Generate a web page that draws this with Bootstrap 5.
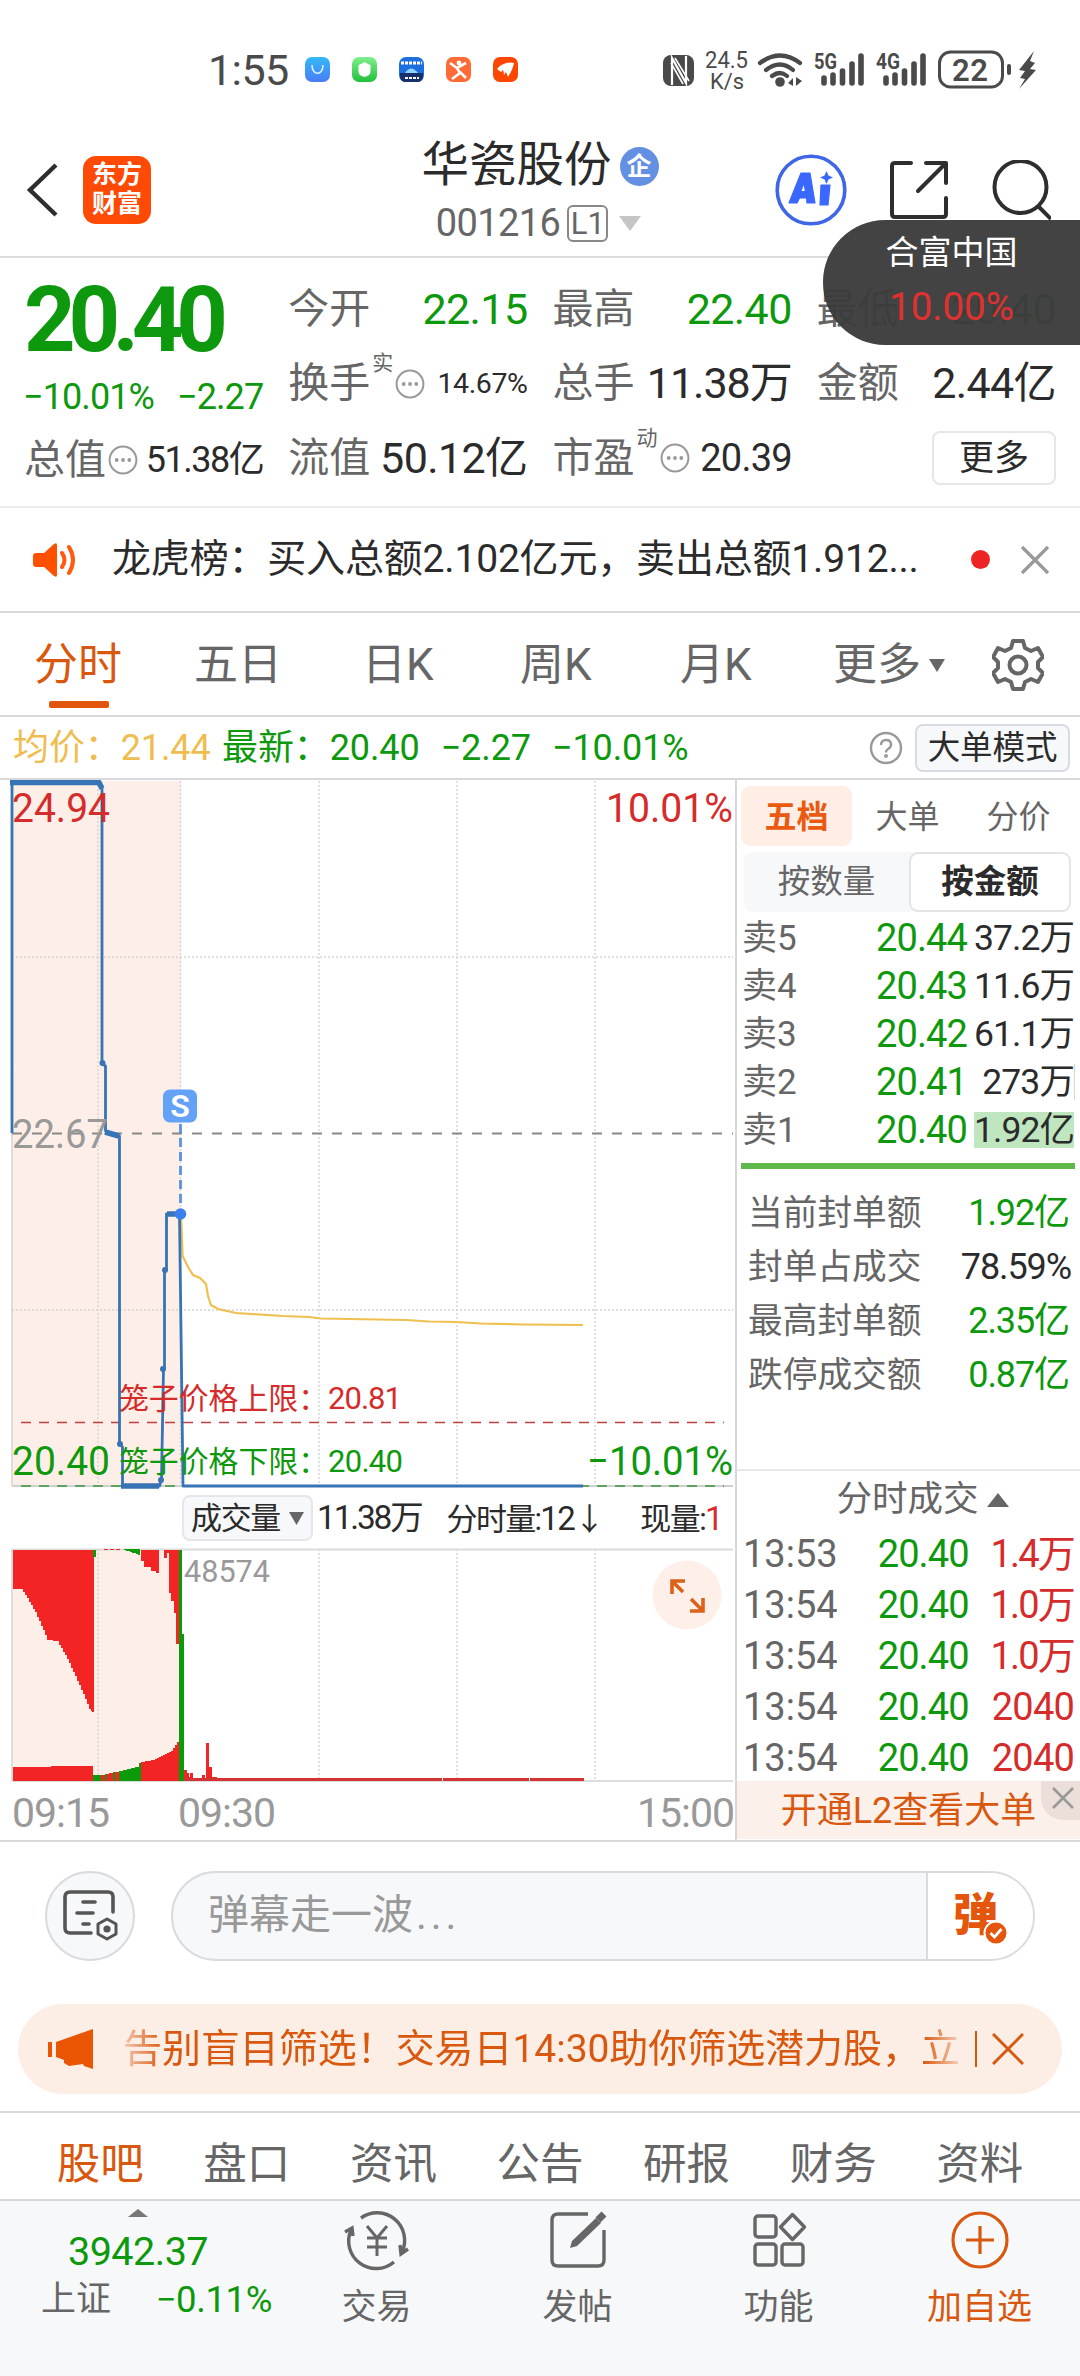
<!DOCTYPE html>
<html lang="zh-CN">
<head>
<meta charset="utf-8">
<meta name="viewport" content="width=device-width, initial-scale=1">
<title>华瓷股份 001216</title>
<link href="https://cdn.jsdelivr.net/npm/bootstrap@5.3.0/dist/css/bootstrap.min.css" rel="stylesheet">
<style>
:root{--up:#d62b2b;--down:#0d980d;--ink:#2b2b2b;--mute:#666;--soft:#999;--brand:#d9580f}
body{width:1080px;height:2376px;overflow:hidden;background:#fff;color:var(--ink);font-family:Roboto,"Noto Sans CJK SC",sans-serif;line-height:1;white-space:nowrap;position:relative}
svg{display:block;flex:none}
.c-up{color:var(--up)}.c-down{color:var(--down)}.c-mute{color:var(--mute)}.c-soft{color:var(--soft)}.c-brand{color:var(--brand)}
.status-bar{height:138px;padding:2px 43px 0 208px;color:#4a4a4a}
.clock{font-size:43px;width:95px;letter-spacing:-.6px}
.head-bar{height:120px;padding:0 29px 0 26px;border-bottom:2px solid #dcdcdc}
.em-logo{width:68px;height:68px;border-radius:13px;background:#ff4a05;color:#fff;font-size:25px;font-weight:700;line-height:29px;padding-top:4px;margin-left:23px}
.head-side{width:310px;padding-bottom:14px}
.stock-name{font-size:47.500px}
.ent-badge{width:39px;height:39px;background:#6490e4;color:#fff;font-size:25px;font-weight:700;margin-left:8px}
.stock-code{font-size:38px;letter-spacing:-.6px;color:var(--mute)}
.lv-box{width:41px;height:37px;border:2px solid #888;border-radius:6px;font-size:31px;letter-spacing:0;margin-left:7px;color:var(--mute)}
.tri-down{width:0;height:0;border:11px solid transparent;border-top:15px solid #c5c5c5;border-bottom:0;margin-left:11px}
.quote{height:250px;padding:14px 24px 0 25px;gap:26px;border-bottom:2px solid #ececec}
.quote .qcol{flex:1 1 0;min-width:0}
.qrow{height:74.5px;display:flex;align-items:center}
.qrow .lb{font-size:41px;color:var(--mute);margin-left:-1px}
.qrow .v{margin-left:auto;font-size:43px;letter-spacing:-.6px}
.qrow sup{font-size:21px;top:-20px;margin:0 2px;color:var(--mute);align-self:center;line-height:1}
.price-big{height:98px;font-size:90px;font-weight:700;letter-spacing:-7.2px;margin-left:-1px}
.price-chg{height:53px;font-size:36px;letter-spacing:-.9px;margin-left:-2px}
.more-btn{width:124px;height:54px;border:2px solid #e6e6e6;border-radius:8px;font-size:35px;color:var(--ink)}
.news{height:105px;padding:0 30px 0 33px;border-bottom:2px solid #d8d8da}
.news-text{font-size:39px;letter-spacing:-.18px;width:869px;padding-left:33px}
.red-dot{width:19px;height:19px;background:#ee2424}
.k-tabs{height:104px;border-bottom:2px solid #d8d8da;font-size:44px;color:var(--mute);padding:2px 0 0 34px}
.k-tabs .kt{position:relative}
.k-tabs .on{color:var(--brand)}
.k-tabs .on::after{content:"";position:absolute;left:15px;width:60px;height:7px;border-radius:2px;background:#e2560c;top:58px}
.info-line{height:63px;border-bottom:2px solid #d8d8da;font-size:36px;padding:1px 10px 0 13px;letter-spacing:-.1px}
.mode-btn{width:155px;height:48px;border:2px solid #d9dbe2;border-radius:8px;background:#f7f8fa;font-size:32.5px;color:var(--ink)}
.board{height:1062px;border-bottom:2px solid #d8d8da}
.chart-col{width:735px}
.vol-head{height:58px;padding:0 13px 2px 182px;font-size:31px}
.vol-btn{width:131px;height:46px;border:2px solid #e4e6ec;border-radius:8px;background:#f7f8fa;letter-spacing:-1.4px}
.time-axis{height:58px;font-size:41px;color:var(--soft);padding:1px 1px 0 12px;letter-spacing:-1px}
.side{width:345px;border-left:2px solid #d8d8da}
.s-tabs{height:72px;padding:6px 0 0 4px;font-size:32px;color:var(--mute)}
.s-tabs .st{width:111px;height:60px;padding-top:2px}
.s-tabs .on{background:#feeee6;border-radius:9px;color:#ea5a10;font-weight:700}
.seg{margin:0 9px 0 7px;height:60px;background:#f7f8fa;border-radius:9px;font-size:32.5px;color:var(--mute)}
.seg .on{width:163px;height:60px;border:2px solid #e4e4e4;border-radius:9px;background:#fff;color:var(--ink);font-weight:700;padding-top:1px}
.seg .off{width:166px}
.ask{height:48px;padding:0 1px 0 5px;font-size:35px;width:338px}
.ask .p,.trade .p{font-size:38px;letter-spacing:-.9px;width:91px;text-align:right}
.ask .a{font-size:35.5px;letter-spacing:-.9px;width:100px;height:36px;line-height:36px;margin-left:7px;text-align:right;color:var(--ink)}
.ask .hot{background:#bfe6bf}
.ask .sliver{box-shadow:1px 0 0 #bfe6bf}
.limit-bar{height:6px;background:#5fb84a;margin:9px 5px 0 4px}
.stat{height:54px;padding:0 11px 0 11px;font-size:34.7px}
.stat .v{font-size:36px;letter-spacing:-1.1px}
.deal-head{height:58px;border-top:2px solid #e8e8e8;font-size:35.5px;padding:2px 0 0 18px}
.tri-up{width:0;height:0;border:11px solid transparent;border-bottom:14px solid #666;border-top:0;margin-left:8px}
.trade{height:51px;padding:0 6px 0 6px;font-size:38px}
.promo{height:58px;background:#fcf0ea;font-size:36px;position:relative;padding-top:2px}
.promo .x{position:absolute;right:0;top:0;width:39px;height:39px;background:#ecdfd9;border-bottom-left-radius:22px}
.barrage{height:176px;padding:0 45px 29px}
.round-btn{width:90px;height:90px;border:2px solid #d9dbe0;background:#f7f8fa}
.b-input{width:864px;height:90px;border:2px solid #d9dbe0;border-radius:45px;overflow:hidden;background:#f7f8fa}
.b-input .ph{font-size:41px;color:#999;padding-left:35px}
.b-input .ph i{font-style:normal;letter-spacing:4px;margin-left:3px}
.b-send{width:107px;height:86px;background:#fff;border-left:2px solid #d9dbe0;position:relative;font-size:45px;font-weight:900;color:#e4560c;padding-left:25px}
.b-send svg{position:absolute;left:55px;top:47px}
.ad{margin:-14px 18px 0;height:90px;border-radius:45px;background:#fceee5;padding:0 38px 0 30px;font-size:39px}
.ad .txt{width:836px;margin-left:29px;letter-spacing:-.05px;overflow:hidden;line-height:50px;-webkit-mask-image:linear-gradient(90deg,rgba(0,0,0,.25),#000 40px,#000 800px,rgba(0,0,0,.2))}
.ad .bar{width:2px;height:36px;background:var(--brand);margin-left:16px}
.f-tabs{margin-top:17px;height:90px;border-top:2px solid #d8d8da;border-bottom:2px solid #d8d8da;padding:18px 27px 0;font-size:43.5px;color:var(--mute)}
.f-tabs div{flex:1;text-align:center}
.dock{height:175px;background:#f7f8fa;color:var(--mute);font-size:35px}
.dock svg{overflow:visible}
.dock .idx{width:276px;padding-top:8px}
.dock .it{width:201px;padding-top:10px}
.dock .it span{margin-top:19px;line-height:40px}
.float-tip{position:absolute;right:0;top:220px;width:257px;height:125px;border-radius:62px 0 0 62px;background:rgba(60,60,60,.965);color:#fff;font-size:33px}
</style>
<script src="https://cdn.jsdelivr.net/npm/bootstrap@5.3.0/dist/js/bootstrap.bundle.min.js"></script>
</head>
<body>
<svg width="0" height="0" class="position-absolute"><defs>
<g id="dots"><circle cx="15" cy="15" r="13.4" fill="none" stroke="#999" stroke-width="2"/><g fill="#999"><circle cx="8.7" cy="15" r="1.9"/><circle cx="15" cy="15" r="1.9"/><circle cx="21.3" cy="15" r="1.9"/></g></g>
</defs></svg>

<div class="status-bar d-flex align-items-center">
  <span class="clock">1:55</span>
  <svg width="220" height="28" viewBox="303 0 220 28">
    <defs><linearGradient id="g1" x1="0" y1="0" x2="0" y2="1"><stop offset="0" stop-color="#35b8f8"/><stop offset="1" stop-color="#4a7cf8"/></linearGradient><linearGradient id="g2" x1="0" y1="0" x2="0" y2="1"><stop offset="0" stop-color="#7ff08c"/><stop offset="1" stop-color="#22bf3c"/></linearGradient></defs>
    <rect x="305" y="1" width="25" height="25" rx="7" fill="url(#g1)"/><path d="M312 9c0 11 11 11 11 0" fill="none" stroke="#d8f1ff" stroke-width="1.6"/>
    <rect x="352" y="1" width="25" height="25" rx="7" fill="url(#g2)"/><path d="M364.500 6q5 3 6 3v6c0 4-3 5-6 6-3-1-6-2-6-6V9q3-1 6-3z" fill="#fff"/>
    <rect x="399" y="1" width="25" height="25" rx="7" fill="#1d6fe0"/><path d="M400 17h23v3q0 6-6 6h-11q-6 0-6-6z" fill="#16306b"/><path d="M401 7h21" stroke="#fff" stroke-width="3" stroke-dasharray="3 1"/><path d="M405 17q6-9 13 0z" fill="#8fd4ff"/><path d="M405 22h14" stroke="#fff" stroke-width="2" stroke-dasharray="3 1"/>
    <rect x="446" y="1" width="25" height="25" rx="7" fill="#ff6a35"/><path d="M450 7l7 5 9-5M457 12l3 5-8 6M460 16l6 6" fill="none" stroke="#fff" stroke-width="2.600"/><circle cx="459" cy="7" r="2.400" fill="#fff"/>
    <rect x="493" y="1" width="25" height="25" rx="7" fill="#fb4702"/><path d="M497 13q7-8 17-6-1 6-6 14-1-3-2-5l-2 3q0-3-1-5l-2 2z" fill="#fff"/>
  </svg>
  <svg class="ms-auto" width="376" height="46" viewBox="662 46 376 46" fill="#4a4a4a" font-family="Roboto">
    <rect x="664" y="54" width="31" height="31" rx="8"/><path d="M673 84V57l14 25V55" fill="none" stroke="#fff" stroke-width="2.200"/><path d="M676 57l14 23M672 62l12 21" stroke="#fff" stroke-width="1.600"/>
    <text x="706" y="67" font-size="23" textLength="43" lengthAdjust="spacingAndGlyphs">24.5</text><text x="711" y="88" font-size="22" textLength="34" lengthAdjust="spacingAndGlyphs">K/s</text>
    <g fill="none" stroke="#4a4a4a" stroke-width="4.200" stroke-linecap="round"><path d="M761 62q20-15 40 0M767 69q14-11 27 0M773 75q8-6 15 0"/></g><circle cx="781" cy="81" r="4.800"/><path d="M789 82l5-5v8zM797 76v9l6-5z"/>
    <text x="815" y="68" font-size="22" font-weight="700" textLength="23" lengthAdjust="spacingAndGlyphs">5G</text><text x="877" y="68" font-size="22" font-weight="700" textLength="24" lengthAdjust="spacingAndGlyphs">4G</text>
    <g stroke="#4a4a4a" stroke-width="5.600" stroke-linecap="round"><path d="M825 77v5M834 74v8M843.500 70v12M853 63v19M862 55v27M887 77v5M896 74v8M905.500 70v12M915 63v19M924 55v27"/></g>
    <rect x="940.500" y="51" width="63" height="35" rx="11" fill="none" stroke="#4a4a4a" stroke-width="3"/><text x="953" y="80" font-size="31" font-weight="600" textLength="36" lengthAdjust="spacing">22</text><rect x="1008" y="63" width="4" height="11" rx="2"/><path d="M1035 50l-15 19 6 1-5 7 5 1-6 10 17-19-6-1 5-6-5-2z"/>
  </svg>
</div>

<header class="head-bar d-flex align-items-center justify-content-between">
  <div class="head-side d-flex align-items-center">
    <svg width="34" height="56" viewBox="0 0 34 56"><path d="M30 3L4 28l26 25" fill="none" stroke="#2e2e2e" stroke-width="4.400"/></svg>
    <div class="em-logo text-center">东方<br>财富</div>
  </div>
  <div class="d-flex flex-column align-items-center">
    <div class="d-flex align-items-center" style="height:52px;margin-left:3px"><span class="stock-name">华瓷股份</span><span class="ent-badge rounded-circle d-flex align-items-center justify-content-center">企</span></div>
    <div class="d-flex align-items-center stock-code" style="height:62px">001216<span class="lv-box d-flex align-items-center justify-content-center">L1</span><span class="tri-down"></span></div>
  </div>
  <div class="head-side d-flex align-items-center justify-content-end">
    <svg width="72" height="72" viewBox="0 0 72 72"><circle cx="36" cy="36" r="33.800" fill="none" stroke="#3f66e6" stroke-width="3.600"/><path d="M26 19h9l5 30h-8l-.5-5h-7l-2.500 5h-8zM28.800 29l-3 8.500h4.700zM46 31h9l-2 20h-8z" fill="#3a68ff" stroke="#3a68ff" stroke-width="1.200" stroke-linejoin="round" fill-rule="evenodd"/><path d="M51.500 17l2 4.500 4.500 2-4.500 2-2 4.500-2-4.500-4.500-2 4.500-2z" fill="#3a68ff"/></svg>
    <svg style="margin-left:42px" width="60" height="60" viewBox="0 0 60 60" fill="none" stroke="#2e2e2e" stroke-width="4" stroke-linecap="round" stroke-linejoin="round"><path d="M22 3H6Q3 3 3 6v48q0 3 3 3h48q3 0 3-3V38M37 3h20v20M56 4L29 31"/></svg>
    <svg style="margin-left:42px" width="60" height="60" viewBox="0 0 60 60" fill="none" stroke="#2e2e2e" stroke-width="4"><circle cx="29.500" cy="27" r="26"/><path d="M47 46l13 13"/></svg>
  </div>
</header>

<section class="quote d-flex">
  <div class="qcol">
    <div class="price-big c-down d-flex align-items-center">20.40</div>
    <div class="price-chg c-down d-flex align-items-center justify-content-between"><span>−10.01%</span><span>−2.27</span></div>
    <div class="qrow"><span class="lb">总值</span><svg style="margin-left:2px" width="30" height="30"><use href="#dots"/></svg><span class="v" style="font-size:36px;letter-spacing:-1.500px">51.38亿</span></div>
  </div>
  <div class="qcol">
    <div class="qrow"><span class="lb">今开</span><span class="v c-down">22.15</span></div>
    <div class="qrow"><span class="lb">换手</span><sup>实</sup><svg width="30" height="30"><use href="#dots"/></svg><span class="v" style="font-size:28.500px;letter-spacing:-.4px">14.67%</span></div>
    <div class="qrow"><span class="lb">流值</span><span class="v">50.12亿</span></div>
  </div>
  <div class="qcol">
    <div class="qrow"><span class="lb">最高</span><span class="v c-down">22.40</span></div>
    <div class="qrow"><span class="lb">总手</span><span class="v" style="letter-spacing:-1px">11.38万</span></div>
    <div class="qrow"><span class="lb">市盈</span><sup>动</sup><svg width="30" height="30"><use href="#dots"/></svg><span class="v" style="font-size:38px;letter-spacing:-.8px">20.39</span></div>
  </div>
  <div class="qcol">
    <div class="qrow"><span class="lb">最低</span><span class="v c-down">20.40</span></div>
    <div class="qrow"><span class="lb">金额</span><span class="v">2.44亿</span></div>
    <div class="qrow"><div class="more-btn ms-auto d-flex align-items-center justify-content-center">更多</div></div>
  </div>
</section>

<section class="news d-flex align-items-center">
  <svg width="46" height="38" viewBox="0 0 46 38"><path d="M3 12h8l10-9q3-2 3 1v30q0 3-3 1l-10-9H3q-3 0-3-3v-8q0-3 3-3z" fill="#ff5000"/><path d="M29 12q5 7 0 14M36 6q8 13 0 26" fill="none" stroke="#ff5a10" stroke-width="4" stroke-linecap="round"/></svg>
  <span class="news-text">龙虎榜：买入总额2.102亿元，卖出总额1.912...</span>
  <span class="red-dot rounded-circle ms-auto" style="margin-right:30px"></span>
  <svg width="30" height="30" viewBox="0 0 30 30"><path d="M2 2l26 26M28 2L2 28" stroke="#999" stroke-width="3.200"/></svg>
</section>

<nav class="k-tabs d-flex align-items-center">
  <span class="kt on" style="width:160px">分时</span><span class="kt" style="width:168px">五日</span><span class="kt" style="width:158px">日K</span><span class="kt" style="width:160px">周K</span><span class="kt" style="width:153px">月K</span>
  <span class="kt d-flex align-items-center" style="width:159px">更多<svg class="ms-2" width="16" height="13"><path d="M0 0h16l-8 13z" fill="#666"/></svg></span>
  <svg width="52" height="52" viewBox="-26 -26 52 52" fill="none" stroke="#666" stroke-width="4" stroke-linejoin="round"><path d="M-5-24H5L7-17 13-14 20-17 25-8 20-3V3L25 8 20 17 13 14 7 17 5 24H-5L-7 17-13 14-20 17-25 8-20 3V-3L-25-8-20-17-13-14-7-17z"/><circle r="8.500"/></svg>
</nav>

<div class="info-line d-flex align-items-center">
  <span style="color:#efbd4f;width:209px">均价：21.44</span>
  <span class="c-down">最新：20.40</span><span class="c-down" style="margin-left:21px">−2.27</span><span class="c-down" style="margin-left:21px">−10.01%</span>
  <svg class="ms-auto" width="34" height="34" viewBox="0 0 34 34" fill="none" stroke="#999" stroke-width="2.400"><circle cx="17" cy="17" r="15"/><path d="M12 14q0-5 5-5t5 4.500q0 3-3 4.500-2 1-2 3.500"/><circle cx="17" cy="25" r=".8" fill="#999"/></svg>
  <div class="mode-btn d-flex align-items-center justify-content-center" style="margin-left:12px">大单模式</div>
</div>

<main class="board d-flex">
  <div class="chart-col">
    <svg width="735" height="710" viewBox="0 780 735 710" font-family="Roboto,'Noto Sans CJK SC',sans-serif">
      <rect x="12" y="781" width="169" height="705" fill="#fdeee7"/>
      <path d="M12 781v705" stroke="#ddd" stroke-width="2"/>
      <g stroke="#d4d4d4" stroke-width="1.400" stroke-dasharray="2 2"><path d="M98 781v705M180.500 781v705M319 781v705M457 781v705M595 781v705M12 957h721M12 1310h721"/></g>
      <path d="M12 1486h721" stroke="#d0d0d0" stroke-width="2"/>
      <path d="M12 1133.500h721" stroke="#888" stroke-width="2" stroke-dasharray="10 10"/>
      <path d="M21 1422.500h703" stroke="#c04040" stroke-width="1.500" stroke-dasharray="10 8"/>
      <path d="M21 1486h703" stroke="#5ea35e" stroke-width="2" stroke-dasharray="10 8"/>
      <path d="M181 1214L182.600 1256 188 1267 193 1275 200 1278 206 1284 208 1296 211 1305 218 1309 236 1313 283 1316 309 1317 321 1318.500 406 1320 429 1321.500 456 1322 481 1323.500 524 1324.500 583 1325" fill="none" stroke="#efc04f" stroke-width="2.200"/>
      <g fill="none" stroke="#3674b5" stroke-width="2.800" stroke-linejoin="round">
        <path d="M12 1133V782h87l3 6v276l3.500 2v65l14 5V1443l3 4v39h37l2-7 2-110h1V1270h2V1214h13L183 1486H583"/>
        <path d="M10 782.500h89l3 6M105 1132l14 4M121 1486h38M167 1214h13" stroke-width="5.500"/>
      </g>
      <g fill="#3674b5"><circle cx="102.500" cy="1063" r="3"/><circle cx="120" cy="1444" r="3"/><circle cx="163" cy="1369" r="3"/><circle cx="165" cy="1270" r="3"/><circle cx="161" cy="1480" r="3"/></g>
      <path d="M180.500 1124v84" stroke="#5b92e0" stroke-width="2.800" stroke-dasharray="9 5"/><circle cx="180.500" cy="1214" r="5.800" fill="#3a80ee"/>
      <rect x="163" y="1089.500" width="34" height="33" rx="7" fill="#64a2f8"/><text x="180" y="1117" font-size="32" font-weight="600" fill="#fff" text-anchor="middle">S</text>
      <g font-size="41"><text x="12" y="822" fill="#d62b2b" textLength="98" lengthAdjust="spacingAndGlyphs">24.94</text><text x="606" y="822" fill="#d62b2b" textLength="127" lengthAdjust="spacingAndGlyphs">10.01%</text>
      <text x="12" y="1148" fill="#999" textLength="96" lengthAdjust="spacingAndGlyphs">22.67</text><text x="12" y="1475" fill="#0d980d" textLength="98" lengthAdjust="spacingAndGlyphs">20.40</text><text x="587" y="1475" fill="#0d980d" textLength="146" lengthAdjust="spacingAndGlyphs">−10.01%</text></g>
      <g font-size="30" fill="#d62b2b"><text x="119" y="1409" textLength="209" lengthAdjust="spacingAndGlyphs">笼子价格上限：</text><text x="328" y="1409" font-size="31" textLength="74">20.81</text></g>
      <g font-size="30" fill="#0d980d"><text x="119" y="1472" textLength="209" lengthAdjust="spacingAndGlyphs">笼子价格下限：</text><text x="328" y="1472" font-size="31" textLength="75">20.40</text></g>
    </svg>
    <div class="vol-head d-flex align-items-center">
      <div class="vol-btn d-flex align-items-center justify-content-center">成交量<svg style="margin-left:9px" width="15" height="13"><path d="M0 0h15l-7.500 13z" fill="#666"/></svg></div>
      <span style="margin-left:4px;font-size:33.500px;letter-spacing:-2.200px">11.38万</span><span class="ms-auto" style="letter-spacing:-1.700px">分时量:<span style="font-size:33px">12</span>↓</span><span style="margin-left:37px;letter-spacing:-1.600px">现量:<span class="c-up" style="font-size:33px">1</span></span>
    </div>
    <svg width="735" height="236" viewBox="0 1548 735 236">
      <rect x="12" y="1549" width="169" height="232" fill="#fdeee7"/><path d="M12 1549v232" stroke="#ddd" stroke-width="2"/>
      <path d="M12 1549.500h721M12 1781h721" stroke="#dcdcdc" stroke-width="2"/>
      <path d="M98 1549v232M319 1549v232M457 1549v232M595 1549v232" stroke="#d4d4d4" stroke-width="1.400" stroke-dasharray="2 2"/>
      <g id="volume-bars" shape-rendering="crispEdges"></g>
      <text x="184" y="1582" font-size="31" font-family="Roboto" fill="#999" textLength="86" lengthAdjust="spacingAndGlyphs">48574</text>
      <circle cx="687" cy="1595" r="34.500" fill="#fef0e9"/><path d="M672 1594v-13h13M672 1581l11 11M703 1598v13h-13M703 1611l-12-12" fill="none" stroke="#dc611b" stroke-width="3.600"/>
    </svg>
    <div class="time-axis d-flex align-items-center"><span style="width:166px">09:15</span><span>09:30</span><span class="ms-auto">15:00</span></div>
  </div>

  <aside class="side">
    <div class="s-tabs d-flex"><div class="st on d-flex align-items-center justify-content-center">五档</div><div class="st d-flex align-items-center justify-content-center">大单</div><div class="st d-flex align-items-center justify-content-center">分价</div></div>
    <div class="seg d-flex align-items-center"><div class="off text-center">按数量</div><div class="on d-flex align-items-center justify-content-center ms-auto">按金额</div></div>
    <div style="padding-top:2px">
      <div class="ask d-flex align-items-center c-mute"><span>卖5</span><span class="p c-down ms-auto">20.44</span><span class="a">37.2万</span></div>
      <div class="ask d-flex align-items-center c-mute"><span>卖4</span><span class="p c-down ms-auto">20.43</span><span class="a">11.6万</span></div>
      <div class="ask d-flex align-items-center c-mute"><span>卖3</span><span class="p c-down ms-auto">20.42</span><span class="a">61.1万</span></div>
      <div class="ask d-flex align-items-center c-mute"><span>卖2</span><span class="p c-down ms-auto">20.41</span><span class="a sliver">273万</span></div>
      <div class="ask d-flex align-items-center c-mute"><span>卖1</span><span class="p c-down ms-auto">20.40</span><span class="a hot">1.92亿</span></div>
    </div>
    <div class="limit-bar"></div>
    <div style="padding-top:17px;height:300px">
      <div class="stat d-flex align-items-center justify-content-between"><span class="c-mute">当前封单额</span><span class="v c-down">1.92亿</span></div>
      <div class="stat d-flex align-items-center justify-content-between"><span class="c-mute">封单占成交</span><span class="v" style="margin-right:-2px">78.59%</span></div>
      <div class="stat d-flex align-items-center justify-content-between"><span class="c-mute">最高封单额</span><span class="v c-down">2.35亿</span></div>
      <div class="stat d-flex align-items-center justify-content-between"><span class="c-mute">跌停成交额</span><span class="v c-down">0.87亿</span></div>
    </div>
    <div class="deal-head d-flex align-items-center justify-content-center c-mute"><span style="margin-left:10px">分时成交</span><span class="tri-up"></span></div>
    <div style="height:254px;padding-top:1px">
      <div class="trade d-flex align-items-center"><span class="c-mute">13:53</span><span class="p c-down" style="margin-left:40px">20.40</span><span class="c-up ms-auto" style="letter-spacing:-1.800px">1.4万</span></div>
      <div class="trade d-flex align-items-center"><span class="c-mute">13:54</span><span class="p c-down" style="margin-left:40px">20.40</span><span class="c-up ms-auto" style="letter-spacing:-1.800px">1.0万</span></div>
      <div class="trade d-flex align-items-center"><span class="c-mute">13:54</span><span class="p c-down" style="margin-left:40px">20.40</span><span class="c-up ms-auto" style="letter-spacing:-1.800px">1.0万</span></div>
      <div class="trade d-flex align-items-center"><span class="c-mute">13:54</span><span class="p c-down" style="margin-left:40px">20.40</span><span class="c-up ms-auto" style="letter-spacing:-.8px">2040</span></div>
      <div class="trade d-flex align-items-center"><span class="c-mute">13:54</span><span class="p c-down" style="margin-left:40px">20.40</span><span class="c-up ms-auto" style="letter-spacing:-.8px">2040</span></div>
    </div>
    <div class="promo d-flex align-items-center justify-content-center c-brand">开通L2查看大单<span class="x"><svg width="39" height="36" viewBox="0 0 39 36"><path d="M12 7l20 20M32 7L12 27" stroke="#999" stroke-width="2.600"/></svg></span></div>
  </aside>
</main>

<section class="barrage d-flex align-items-center justify-content-between">
  <div class="round-btn rounded-circle d-flex align-items-center justify-content-center">
    <svg width="56" height="52" viewBox="0 0 56 52" fill="none" stroke="#555" stroke-width="3.600" stroke-linecap="round" stroke-linejoin="round"><path d="M29 43H8q-5 0-5-5V7q0-5 5-5h38q5 0 5 5v15M21 12h12M15 23h16M21 34h6"/><path d="M45 29l9 5v10l-9 5-9-5V34z" stroke-width="3"/><circle cx="45" cy="39" r="1.800" fill="#555"/></svg>
  </div>
  <div class="b-input d-flex align-items-center"><span class="ph">弹幕走一波<i>...</i></span>
    <div class="b-send ms-auto d-flex align-items-center">弹<svg width="26" height="26" viewBox="0 0 26 26"><circle cx="13" cy="13" r="11.500" fill="#e4560c" stroke="#fff" stroke-width="2"/><path d="M7.500 13l4 4 7-8" fill="none" stroke="#fff" stroke-width="2.800"/></svg></div>
  </div>
</section>

<section class="ad d-flex align-items-center c-brand">
  <svg width="46" height="40" viewBox="0 0 46 40" fill="#ea5504"><path d="M0 13h4v15H0zM8 13L45 0v40l-9-3-1-2-14 2-5-3v-3l-8-3z"/></svg>
  <div class="txt">告别盲目筛选！交易日14:30助你筛选潜力股，立</div>
  <span class="bar"></span>
  <svg class="ms-auto" width="32" height="32" viewBox="0 0 32 32"><path d="M1 1l30 30M31 1L1 31" stroke="#d9580f" stroke-width="3"/></svg>
</section>

<nav class="f-tabs d-flex align-items-center">
  <div class="c-brand">股吧</div><div>盘口</div><div>资讯</div><div>公告</div><div>研报</div><div>财务</div><div>资料</div>
</nav>

<footer class="dock d-flex">
  <div class="idx d-flex flex-column align-items-center">
    <svg width="20" height="8"><path d="M0 8L10 0l10 8z" fill="#777"/></svg>
    <div class="c-down" style="font-size:39.500px;letter-spacing:-.5px;line-height:46px;margin-top:12px">3942.37</div>
    <div class="d-flex align-self-stretch justify-content-between" style="line-height:40px;padding:0 4px 0 41px;margin-top:5px"><span>上证</span><span class="c-down" style="font-size:36.500px;letter-spacing:-.4px">−0.11%</span></div>
  </div>
  <div class="it d-flex flex-column align-items-center">
    <svg width="66" height="58" viewBox="-33 -29 66 58" fill="none" stroke="#666" stroke-width="3.400"><path d="M-16-22A27.500 27.500 0 0 1 25 12M17 22A27.500 27.500 0 0 1-26-10M-32-8l7-4 1 8M31 9l-7 5-1-9"/><path d="M-10-14L0-2 10-14M0-2v18M-10-2h20M-10 7h20" stroke-width="3"/></svg><span>交易</span></div>
  <div class="it d-flex flex-column align-items-center">
    <svg width="58" height="58" viewBox="0 0 58 58" fill="none" stroke="#666" stroke-width="3.400"><path d="M39 3H9Q3 3 3 9v40q0 6 6 6h40q6 0 6-6V19"/><path d="M21 37l2-7 24-23 5 5-24 23z" fill="#666" stroke="none"/><path d="M49 9l6-6" stroke-width="7"/></svg><span>发帖</span></div>
  <div class="it d-flex flex-column align-items-center">
    <svg width="56" height="58" viewBox="0 0 56 58" fill="none" stroke="#666" stroke-width="3.400" stroke-linejoin="round"><rect x="4" y="5" width="21" height="21" rx="3"/><rect x="4" y="33" width="21" height="21" rx="3"/><rect x="31" y="33" width="21" height="21" rx="3"/><path d="M41.500 3.500L53.500 16l-12 12.500L29.500 16z"/></svg><span>功能</span></div>
  <div class="it d-flex flex-column align-items-center c-brand">
    <svg width="58" height="58" viewBox="0 0 58 58" fill="none" stroke="#d9580f" stroke-width="3.200"><circle cx="29" cy="29" r="27"/><path d="M29 15v28M15 29h28"/></svg><span>加自选</span></div>
</footer>

<div class="float-tip d-flex flex-column align-items-center">
  <span style="line-height:40px;margin-top:13px">合富中国</span><span style="line-height:44px;margin-top:12px;font-size:38.500px;color:#e03131">10.00%</span>
</div>

<script>
(function(){
  var RED='#f22424',GREEN='#0a9a0a',TOP=1550,BASE=1781,out='';
  function bar(x,y1,y2,c,w){out+='<rect x="'+x+'" y="'+y1+'" width="'+(w||3)+'" height="'+(y2-y1)+'" fill="'+c+'"/>';}
  function at(pts,x){for(var i=1;i<pts.length;i++){if(x<=pts[i][0]){var a=pts[i-1],b=pts[i];return a[1]+(b[1]-a[1])*(x-a[0])/(b[0]-a[0]);}}return pts[pts.length-1][1];}
  /* call-auction unmatched volume, hanging from the top */
  var hang=[[13,1589],[21,1589],[28,1600],[35,1612],[42,1628],[47,1640],[57,1641],[65,1655],[75,1676],[83,1694],[90,1711]];
  for(var x=13;x<93;x+=2)bar(x,TOP,Math.round(at(hang,x)),RED,2);
  bar(92,TOP,1712,RED,2);bar(93,TOP,1557,GREEN,3);
  for(x=104;x<122;x+=6)bar(x,1549,1550,RED,4);
  var g=[[124,1550],[139,1555]];for(x=124;x<140;x+=2)bar(x,TOP-1,Math.round(at(g,x)),GREEN,2);
  bar(141,TOP,1561,RED,3);bar(144,TOP,1567,RED,7);bar(151,TOP,1571,RED,5);bar(156,TOP,1573,RED,3);
  bar(164,TOP,1558,RED,3);bar(167,TOP,1553,RED,2);bar(169,TOP,1593,RED,2);bar(171,TOP,1601,RED,3);bar(174,TOP,1613,RED,2);bar(176,TOP,1644,RED,3);
  /* matched volume along the base line */
  for(x=13;x<93;x+=2)bar(x,x<50?1767:1766,BASE,RED,2);
  bar(93,1775,BASE,GREEN,8);
  var lo=[[101,1775],[124,1770],[140,1766]];
  for(x=101;x<139;x+=2)bar(x,Math.round(at(lo,x)),BASE,(x>122||x%8===1||x===119)?GREEN:RED,2);
  bar(139,1763,BASE,GREEN,2);
  var hi=[[141,1762],[152,1760],[164,1755],[171,1751],[176,1744],[179,1739]];
  for(x=141;x<178;x+=2)bar(x,Math.round(at(hi,x)),BASE,RED,2);
  bar(178.500,TOP,BASE,GREEN,3);bar(181,1634,BASE,GREEN,3);
  [[184,1770],[186,1773],[188,1777],[190,1773],[192,1778],[202,1775],[206,1743],[209,1767],[211,1777],[214,1777]].forEach(function(p){bar(p[0],p[1],BASE,RED,2.500);});
  bar(184,1778,1781,'#d23434',258);bar(443,1778,1781,'#d23434',86);bar(530,1778,1781,'#d23434',54);
  document.getElementById('volume-bars').innerHTML=out;
})();
</script>
</body>
</html>
